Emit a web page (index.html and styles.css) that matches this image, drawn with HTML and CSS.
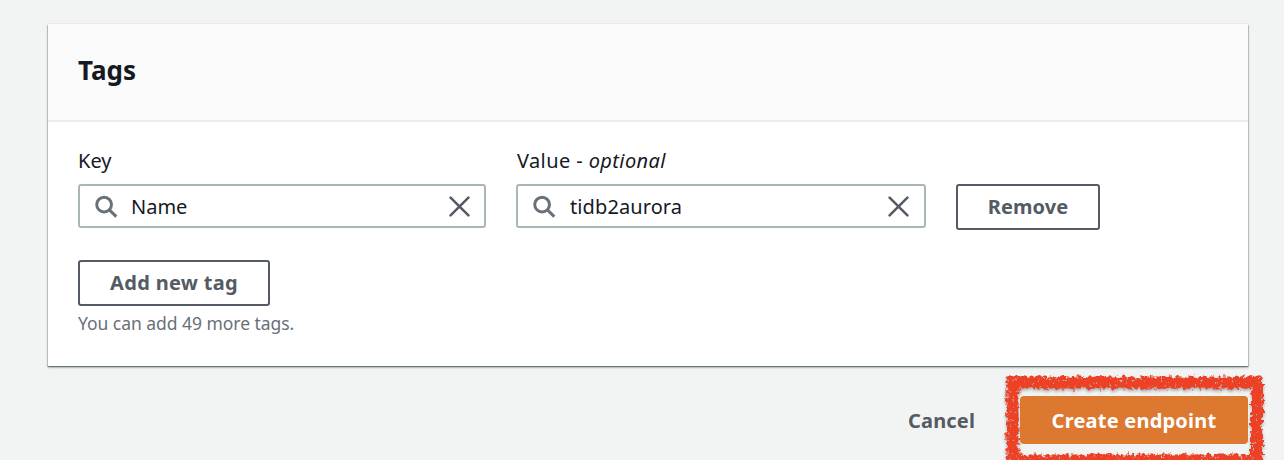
FILE: index.html
```html
<!DOCTYPE html>
<html lang="en">
<head>
<meta charset="utf-8">
<title>Create endpoint</title>
<link rel="stylesheet" href="styles.css">
</head>
<body>
<main class="page">
  <section class="card">
    <header class="card-header"><h2 class="title">Tags</h2></header>
    <div class="card-body">
      <div class="row">
        <div class="field key">
          <label class="label label-key">Key</label>
          <div class="input">
            <svg class="search" viewBox="0 0 24 24"><circle cx="9.5" cy="10" r="7.7"/><path d="M15 15.500l7.200 7"/></svg>
            <span class="value name">Name</span>
            <svg class="clear" viewBox="0 0 20 20"><path d="M1.500 1.500l17 17M18.500 1.500l-17 17"/></svg>
          </div>
        </div>
        <div class="field val">
          <label class="label label-value">Value - <em>optional</em></label>
          <div class="input">
            <svg class="search" viewBox="0 0 24 24"><circle cx="9.500" cy="10" r="7.7"/><path d="M15 15.500l7.200 7"/></svg>
            <span class="value tidb">tidb2aurora</span>
            <svg class="clear" viewBox="0 0 20 20"><path d="M1.500 1.500l17 17M18.500 1.500l-17 17"/></svg>
          </div>
        </div>
        <button class="button remove">Remove</button>
      </div>
      <button class="button add">Add new tag</button>
      <p class="hint">You can add 49 more tags.</p>
    </div>
  </section>
  <footer class="actions">
    <button class="link">Cancel</button>
    <div class="primary-wrap">
      <svg class="brush" viewBox="0 0 284 110">
        <defs>
          <filter id="rough" x="0" y="0" width="284" height="110" filterUnits="userSpaceOnUse" color-interpolation-filters="sRGB">
            <feTurbulence type="fractalNoise" baseFrequency="0.26" numOctaves="2" seed="8" result="noise"/>
            <feDisplacementMap in="SourceGraphic" in2="noise" scale="9" xChannelSelector="R" yChannelSelector="G" result="edge"/>
            <feTurbulence type="fractalNoise" baseFrequency="0.35" numOctaves="2" seed="3" result="grain"/>
            <feColorMatrix in="grain" type="matrix" values="0 0 0 0 0  0 0 0 0 0  0 0 0 0 0  9 0 0 0 -2" result="holes"/>
            <feComposite in="edge" in2="holes" operator="in" result="bristle"/>
            <feDropShadow in="bristle" dx="0" dy="2" stdDeviation="1.8" flood-color="#000" flood-opacity=".3"/>
          </filter>
        </defs>
        <rect class="stroke" x="20.500" y="14.500" width="244.500" height="78"/>
      </svg>
      <button class="primary">Create endpoint</button>
    </div>
  </footer>
</main>
</body>
</html>
```
FILE: styles.css
```css
* { box-sizing: border-box; }
body { margin: 0; background: #f2f3f3; overflow: hidden; color: #16191f; font-family: "Noto Sans", sans-serif; font-size: 20px; }
button { font: inherit; padding: 0; cursor: pointer; white-space: nowrap; }
.page { height: 460px; padding: 24px 36px 0 48px; overflow: hidden; }
.card { height: 342px; background: #fff; box-shadow: 0 1px 1px rgba(0,28,36,.28), 0 2px 2px rgba(0,28,36,.2), 1px 1px 1px rgba(0,28,36,.15), -1px 1px 1px rgba(0,28,36,.15), 0 -1px 0 #e8eaea; }
.card-header { height: 98px; background: #fafafa; border-bottom: 2px solid #eaeded; padding: 27px 30px 0; }
.title { margin: 0; font-size: 26px; line-height: 38px; font-weight: 700; letter-spacing: 0; }
.card-body { padding: 24px 30px 0; }
.row { display: flex; align-items: flex-end; gap: 30px; height: 84px; }
.field { height: 84px; }
.key { width: 408px; }
.val { width: 410px; }
.label { display: block; height: 38px; line-height: 30px; white-space: nowrap; }
.label-value { padding-left: 1px; letter-spacing: .4px; }
.input { display: flex; align-items: center; height: 44px; border: 2px solid #aab7b8; border-radius: 3px; padding: 0 14px 0 15px; }
.search { width: 23px; height: 23px; fill: none; stroke: #687078; stroke-width: 3.1; }
.clear { width: 21px; height: 21px; margin-left: auto; fill: none; stroke: #545b64; stroke-width: 2.4; stroke-linecap: round; }
.value { margin-left: 13px; padding-top: 2px; line-height: 28px; }
.tidb { margin-left: 14px; letter-spacing: .1px; }
.val .input { padding-right: 15px; }
.button { height: 46px; background: #fff; border: 2px solid #545b64; border-radius: 3px; color: #545b64; font-weight: 700; line-height: 42px; }
.remove { width: 144px; align-self: flex-start; margin-top: 38px; flex-shrink: 0; letter-spacing: .1px; }
.add { display: block; width: 192px; margin-top: 30px; letter-spacing: .3px; }
.hint { margin: 3px 0 0; color: #687078; font-size: 17.500px; line-height: 28px; letter-spacing: -.04px; }
.actions { display: flex; justify-content: flex-end; align-items: center; gap: 45px; height: 48px; margin-top: 30px; }
.link { border: 0; background: none; color: #545b64; font-weight: 700; letter-spacing: .15px; }
.primary-wrap { position: relative; width: 228px; height: 48px; }
.primary { position: relative; width: 228px; height: 48px; background: #dd7830; color: #fff; border: 0; border-radius: 4px; font-weight: 700; letter-spacing: .22px; }
.brush { position: absolute; left: -28px; top: -28px; width: 284px; height: 110px; pointer-events: none; }
.stroke { fill: none; stroke: #ed4024; stroke-width: 12; filter: url(#rough); }
```
